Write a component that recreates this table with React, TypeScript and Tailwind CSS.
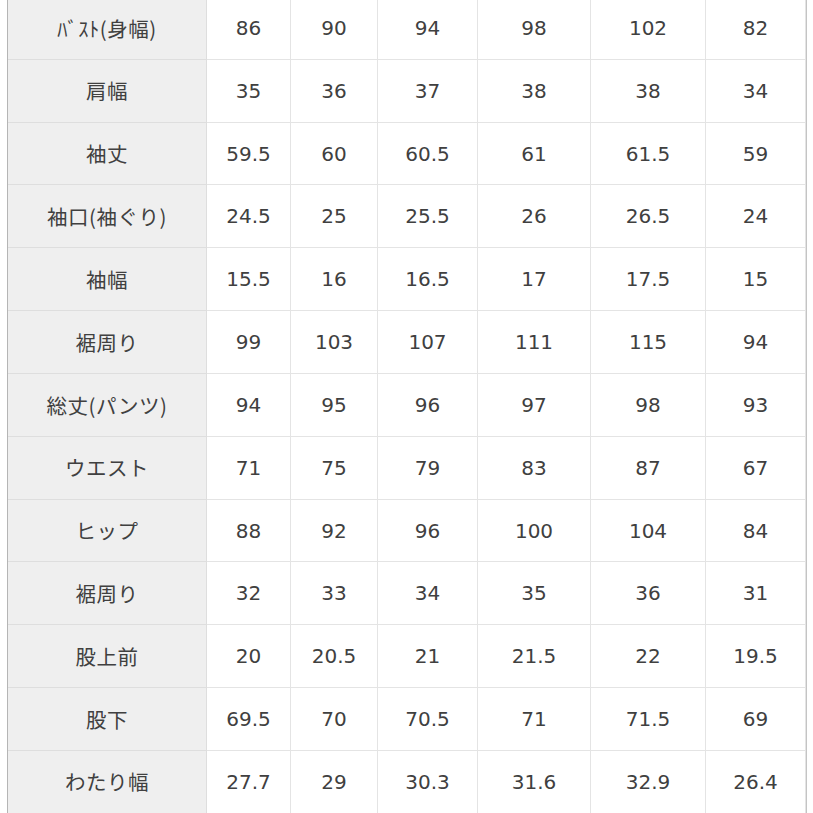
const rows: string[][] = [
  ["ﾊﾞｽﾄ(身幅)", "86", "90", "94", "98", "102", "82"],
  ["肩幅", "35", "36", "37", "38", "38", "34"],
  ["袖丈", "59.5", "60", "60.5", "61", "61.5", "59"],
  ["袖口(袖ぐり)", "24.5", "25", "25.5", "26", "26.5", "24"],
  ["袖幅", "15.5", "16", "16.5", "17", "17.5", "15"],
  ["裾周り", "99", "103", "107", "111", "115", "94"],
  ["総丈(パンツ)", "94", "95", "96", "97", "98", "93"],
  ["ウエスト", "71", "75", "79", "83", "87", "67"],
  ["ヒップ", "88", "92", "96", "100", "104", "84"],
  ["裾周り", "32", "33", "34", "35", "36", "31"],
  ["股上前", "20", "20.5", "21", "21.5", "22", "19.5"],
  ["股下", "69.5", "70", "70.5", "71", "71.5", "69"],
  ["わたり幅", "27.7", "29", "30.3", "31.6", "32.9", "26.4"],
];

const App = () => {
  return (
    <div className="w-[813px] h-[813px] overflow-hidden bg-white pl-[7px]">
      <div className="-mt-[3px] w-[800px] border-l border-l-[#b5b5b5] border-r-2 border-r-[#c4c4c4] grid grid-cols-[199px_84px_87px_100px_113px_115px_100px] font-['DejaVu_Sans','Noto_Sans_CJK_JP',sans-serif] text-[#404040]">
        {rows.map((row, i) =>
          row.map((cell, j) => (
            <div
              key={i + "-" + j}
              className={
                j === 0
                  ? "h-[62.83px] flex items-center justify-center bg-[#efefef] border-b border-r border-[#dedede] text-[20.5px] tracking-[0.5px] font-['Noto_Sans_CJK_JP',sans-serif]"
                  : "h-[62.83px] flex items-center justify-center bg-white border-b border-r border-[#e4e4e4] text-[20px]"
              }
            >
              {cell}
            </div>
          ))
        )}
      </div>
    </div>
  );
};

export default App;
